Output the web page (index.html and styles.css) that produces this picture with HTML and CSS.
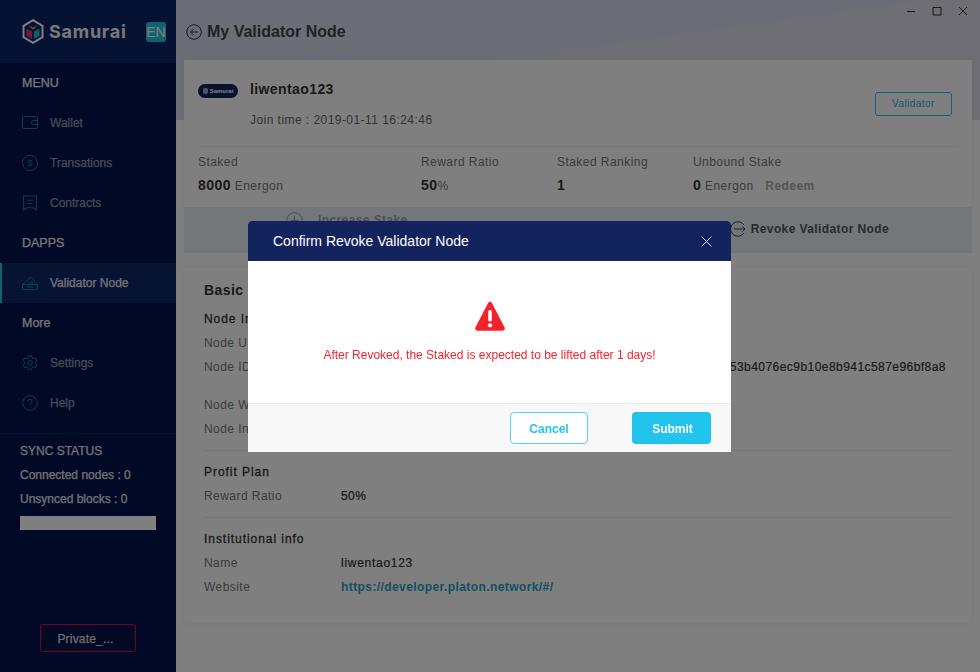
FILE: index.html
```html
<!DOCTYPE html>
<html lang="en">
<head>
<meta charset="utf-8">
<title>My Validator Node</title>
<link rel="stylesheet" href="styles.css">
</head>
<body>
<div class="app">
  <aside class="sidebar">
    <div class="brand">
      <svg class="logo" width="22" height="25" viewBox="0 0 22 25"><path d="M11 1.200 20.500 6.800v11.400L11 23.800 1.500 18.200V6.800z" fill="none" stroke="#fff" stroke-width="2"/><path d="M4.500 9.500 10 12.500V20l-5.500-3z" fill="#f0306a"/><path d="M17.500 9.500 12 12.500V20l5.500-3z" fill="#1fb8d8"/><path d="m6.500 6.500 2.500 1 2 1.200 2-1.200 2.500-1L11 10.800z" fill="#f5b82e"/></svg>
      <span class="brand-name">Samurai</span>
      <span class="lang">EN</span>
    </div>
    <div class="nav-title">MENU</div>
    <div class="nav-item">
      <svg class="nav-icon" viewBox="0 0 16 14"><rect x=".5" y=".5" width="15" height="12" rx="1.500"/><path d="M15.500 4.500h-4a2 2 0 0 0 0 4h4"/></svg>
      <span>Wallet</span>
    </div>
    <div class="nav-item">
      <svg class="nav-icon" viewBox="0 0 16 16"><path d="M3 2.500A7 7 0 0 1 14.500 5M13 13.500A7 7 0 0 1 1.500 11M1.500 11A7 7 0 0 1 3 2.500M14.500 5A7 7 0 0 1 13 13.500"/><text x="8" y="11" class="nav-icon-text">$</text></svg>
      <span>Transations</span>
    </div>
    <div class="nav-item">
      <svg class="nav-icon" viewBox="0 0 14 15"><path d="M1 1h12v13l-3-2H4l-3 2z"/><path d="M4 5h6M4 8h5"/></svg>
      <span>Contracts</span>
    </div>
    <div class="nav-title">DAPPS</div>
    <div class="nav-item active">
      <svg class="nav-icon" viewBox="0 0 16 14"><path d="M.5 8.500h15v5H.5zM.5 8.500l3-3M15.500 8.500l-3-2"/><path d="m4 6.500 4.500-5.500 4 3L9 8.500"/><path d="m6 6 1.500 1.500 3-3M5 11h6"/></svg>
      <span>Validator Node</span>
    </div>
    <div class="nav-title">More</div>
    <div class="nav-item">
      <svg class="nav-icon" viewBox="0 0 16 16"><path d="M6.500.8h3l.4 2 1.400.8 2-.6 1.500 2.600-1.500 1.400v1.600l1.500 1.400-1.500 2.600-2-.6-1.400.8-.4 2h-3l-.4-2-1.400-.8-2 .6L1.200 10l1.500-1.400V7L1.200 5.600l1.500-2.600 2 .6 1.400-.8z"/><circle cx="8" cy="7.800" r="2.300"/></svg>
      <span>Settings</span>
    </div>
    <div class="nav-item">
      <svg class="nav-icon" viewBox="0 0 16 16"><circle cx="8" cy="8" r="7.300"/><text x="8" y="11.500" class="nav-icon-text help">?</text></svg>
      <span>Help</span>
    </div>
    <div class="sync">
      <div class="sync-title">SYNC STATUS</div>
      <div class="sync-row">Connected nodes : 0</div>
      <div class="sync-row">Unsynced blocks : 0</div>
      <div class="sync-bar"></div>
    </div>
    <div class="network"><span class="network-btn">Private_...</span></div>
  </aside>

  <main class="main">
    <div class="window-controls">
      <svg width="10" height="10" viewBox="0 0 10 10"><path d="M1 5.500h8"/></svg>
      <svg width="10" height="10" viewBox="0 0 10 10"><path d="M1 1.500h8v7.500H1z"/></svg>
      <svg width="10" height="10" viewBox="0 0 10 10"><path d="m1 1 8 8M9 1l-8 8"/></svg>
    </div>
    <header class="page-head">
      <svg class="back" width="16" height="16" viewBox="0 0 16 16"><circle cx="8" cy="8" r="7.300"/><path d="M12 8H4.500M7.500 5 4.500 8l3 3"/></svg>
      <h1>My Validator Node</h1>
    </header>

    <section class="card summary">
      <div class="profile">
        <div class="badge-logo"><i></i><span>Samurai</span></div>
        <div class="profile-text">
          <div class="name">liwentao123</div>
          <div class="join">Join time : 2019-01-11 16:24:46</div>
        </div>
        <span class="role">Validator</span>
      </div>
      <div class="stats">
        <div class="stat s1"><div class="stat-label">Staked</div><div class="stat-value"><b>8000</b> Energon</div></div>
        <div class="stat s2"><div class="stat-label">Reward Ratio</div><div class="stat-value"><b>50</b>%</div></div>
        <div class="stat s3"><div class="stat-label">Staked Ranking</div><div class="stat-value"><b>1</b></div></div>
        <div class="stat s4"><div class="stat-label">Unbound Stake</div><div class="stat-value"><b>0</b> Energon <span class="redeem">Redeem</span></div></div>
      </div>
    </section>
    <div class="actions">
      <div class="action increase">
        <svg width="17" height="17" viewBox="0 0 17 17"><circle cx="8.500" cy="8.500" r="7.800"/><path d="M4.500 8.500h8M8.500 4.500v8"/></svg>
        <span>Increase Stake</span>
      </div>
      <div class="action revoke">
        <svg width="16" height="16" viewBox="0 0 16 16"><path d="M14 4A7.300 7.300 0 1 0 14 12"/><path d="M4 8h11M12.500 5.500 15 8l-2.500 2.500"/></svg>
        <span>Revoke Validator Node</span>
      </div>
    </div>

    <section class="card details">
      <h2>Basic Info</h2>
      <div class="group-title">Node Info</div>
      <div class="row"><span class="key">Node URL</span></div>
      <div class="row tall"><span class="key">Node ID</span><span class="val node-id">53b4076ec9b10e8b941c587e96bf8a8</span></div>
      <div class="row"><span class="key">Node Wallet</span></div>
      <div class="row"><span class="key">Node Info</span></div>
      <hr>
      <div class="group-title">Profit Plan</div>
      <div class="row"><span class="key">Reward Ratio</span><span class="val">50%</span></div>
      <hr>
      <div class="group-title">Institutional info</div>
      <div class="row"><span class="key">Name</span><span class="val wide">liwentao123</span></div>
      <div class="row"><span class="key">Website</span><span class="val link">https://developer.platon.network/#/</span></div>
    </section>
  </main>
</div>

<div class="overlay"></div>
<div class="modal">
  <div class="modal-head">
    <span>Confirm Revoke Validator Node</span>
    <svg width="11" height="11" viewBox="0 0 11 11"><path d="m.5.500 10 10M10.500.500l-10 10"/></svg>
  </div>
  <div class="modal-body">
    <svg width="30" height="30" viewBox="0 0 30 30"><path d="M13.200 1.800a2.100 2.100 0 0 1 3.600 0L29.500 26.300a2.200 2.200 0 0 1-1.900 3.400H2.400a2.200 2.200 0 0 1-1.900-3.400z" fill="#f5222d"/><rect x="13.200" y="9" width="3.600" height="11.500" rx="1.800" fill="#fff"/><circle cx="15" cy="24.300" r="2.100" fill="#fff"/></svg>
    <p>After Revoked, the Staked is expected to be lifted after 1 days!</p>
  </div>
  <div class="modal-foot">
    <button class="btn cancel">Cancel</button>
    <button class="btn submit">Submit</button>
  </div>
</div>
</body>
</html>
```

FILE: styles.css
```css
* { box-sizing: border-box; }
html, body { margin: 0; height: 100%; overflow: hidden; }
body { font-family: "Liberation Sans", Arial, sans-serif; color: #333; }

.app { display: flex; height: 672px; }

/* sidebar */
.sidebar { width: 176px; flex: none; background: #04124c; color: #fff; display: flex; flex-direction: column; font-size: 12px; -webkit-text-stroke: .25px currentColor; }
.brand { height: 63px; background: #0c2466; display: flex; align-items: center; padding-left: 22px; }
.logo { flex: none; }
.brand-name { font: 700 18px/1 Inter, sans-serif; margin-left: 5px; letter-spacing: .75px; width: 97px; -webkit-text-stroke: 0; color: #f2f2f2; }
.lang { width: 20px; height: 20px; border-radius: 3px; background: #26c4e4; font-size: 14px; line-height: 20px; text-align: center; -webkit-text-stroke: 0; }
.nav-title { height: 40px; line-height: 40px; padding-left: 22px; color: #eee; font-size: 12.500px; }
.nav-item { height: 40px; display: flex; align-items: center; padding-left: 22px; color: #8f94ab; }
.nav-item span { margin-left: 12px; }
.nav-item.active { background: #0c2666; box-shadow: inset 2px 0 0 #26c4e4; color: #e4e7f0; }
.nav-icon { width: 16px; height: 16px; fill: none; stroke: #1a7aa0; stroke-width: 1; flex: none; }
.nav-icon-text { font-size: 9px; text-anchor: middle; fill: #1a7aa0; stroke: none; -webkit-text-stroke: 0; }
.nav-icon-text.help { font-size: 10px; }
.sync { margin-top: 10px; border-top: 1px solid #0c1c5c; padding: 5px 20px 0; color: #e4e4e4; }
.sync-title { height: 24px; line-height: 24px; }
.sync-row { height: 24px; line-height: 24px; }
.sync-bar { height: 14px; background: #fff; margin-top: 5px; }
.network { margin-top: auto; padding: 0 40px 20px; }
.network-btn { display: block; height: 28px; border: 1px solid #e6004c; border-radius: 3px; line-height: 28px; text-align: center; color: #ddd; padding-right: 5px; letter-spacing: .2px; }

/* main */
.main {
  flex: 1; min-width: 0; padding: 0 8px; position: relative; background-color: #fff;
  background-image: linear-gradient(172deg, #d6dbee 0 45%, transparent 45.200%), linear-gradient(#dcdde8, #dcdde8);
  background-size: 100% 120px; background-repeat: no-repeat;
  letter-spacing: .45px;
}
.window-controls { position: absolute; top: 6px; right: 12px; display: flex; gap: 16px; }
.window-controls svg { fill: none; stroke: #333; stroke-width: 1; }
.page-head { height: 60px; display: flex; align-items: center; gap: 5px; padding: 3px 0 0 2px; }
.back { fill: none; stroke: #333; stroke-width: 1; flex: none; }
h1 { margin: 0; font-size: 16px; font-weight: 700; color: #444; letter-spacing: 0; }

.card { background: #fff; box-shadow: 0 0 6px rgba(0, 0, 0, .06); }
.summary { height: 147px; padding: 0 14px; font-size: 12px; }
.profile { height: 86px; display: flex; position: relative; }
.badge-logo { width: 40px; height: 14px; margin-top: 24px; border-radius: 7px; background: #13235e; color: #fff; font-size: 6px; font-weight: 700; display: flex; align-items: center; justify-content: center; gap: 2px; letter-spacing: 0; }
.badge-logo i { width: 5px; height: 6px; background: #aab; border-radius: 2px; }
.profile-text { margin-left: 12px; }
.name { font-size: 14px; font-weight: 700; line-height: 18px; margin-top: 20px; color: #333; letter-spacing: .4px; }
.join { margin-top: 14px; line-height: 16px; color: #666; }
.role { position: absolute; right: 6px; top: 32px; width: 77px; height: 24px; border: 1px solid #26c4e4; border-radius: 3px; text-align: center; line-height: 22px; color: #26b4d4; font-size: 10px; }
.stats { display: flex; border-top: 1px solid #eee; padding-top: 7px; }
.stat-label { color: #777; line-height: 16px; margin-bottom: 7px; }
.stat-value { color: #777; line-height: 16px; }
.stat-value b { color: #333; font-size: 14px; }
.s1 { width: 223px; } .s2 { width: 136px; } .s3 { width: 136px; }
.redeem { color: #aaa; font-weight: 700; margin-left: 8px; }

.actions { height: 46px; background: #e6eef2; display: flex; align-items: center; font-size: 12px; font-weight: 700; color: #555; letter-spacing: .4px; }
.action { display: flex; align-items: center; gap: 5px; position: relative; }
.action svg { fill: none; stroke: #444; flex: none; }
.increase { margin-left: 102px; opacity: .5; top: -10px; gap: 15px; }
.revoke { margin-left: 322px; top: -1px; }

.details { margin-top: 15px; height: 355px; padding: 12px 20px 0; font-size: 12px; }
h2 { margin: 0; font-size: 14px; line-height: 20px; font-weight: 700; color: #333; }
.group-title { color: #333; line-height: 16px; margin: 11px 0 8px; -webkit-text-stroke: .3px currentColor; letter-spacing: .95px; }
.row { display: flex; height: 16px; line-height: 16px; margin-bottom: 8px; color: #777; }
.row.tall { margin-bottom: 22px; }
.key { width: 137px; flex: none; }
.val { color: #333; white-space: nowrap; -webkit-text-stroke: .2px currentColor; }
.val.wide { letter-spacing: .72px; }
.node-id { margin-left: auto; margin-right: 6px; }
.link { color: #1fa0c0; font-weight: 700; letter-spacing: .41px; -webkit-text-stroke: 0; }
hr { border: 0; border-top: 1px solid #eee; margin: 13px 0; }

/* overlay and modal */
.overlay { position: fixed; inset: 0; background: rgba(0, 0, 0, .5); }
.modal { position: fixed; left: 248px; top: 221px; width: 483px; height: 231px; display: flex; flex-direction: column; background: #fff; border-radius: 4px 4px 0 0; overflow: hidden; }
.modal-head { height: 40px; flex: none; background: #13235e; color: #fff; display: flex; align-items: center; justify-content: space-between; padding: 0 19px 0 25px; font-size: 14px; }
.modal-head svg { fill: none; stroke: #dfe3ee; stroke-width: 1; }
.modal-body { flex: 1; display: flex; flex-direction: column; align-items: center; padding-top: 40px; }
.modal-body p { margin: 16px 0 0; color: #f5222d; font-size: 12px; line-height: 16px; }
.modal-foot { height: 49px; flex: none; background: #f8f8f8; border-top: 1px solid #eee; display: flex; justify-content: flex-end; align-items: center; gap: 44px; padding-right: 20px; }
.btn { height: 32px; border-radius: 4px; font: 700 12px "Liberation Sans", sans-serif; padding: 2px 0 0; }
.cancel { width: 78px; background: #fff; border: 1px solid #56d2ee; color: #26c4ec; }
.submit { width: 79px; padding-left: 2px; background: #20c4ec; border: 0; color: #fff; }
```
